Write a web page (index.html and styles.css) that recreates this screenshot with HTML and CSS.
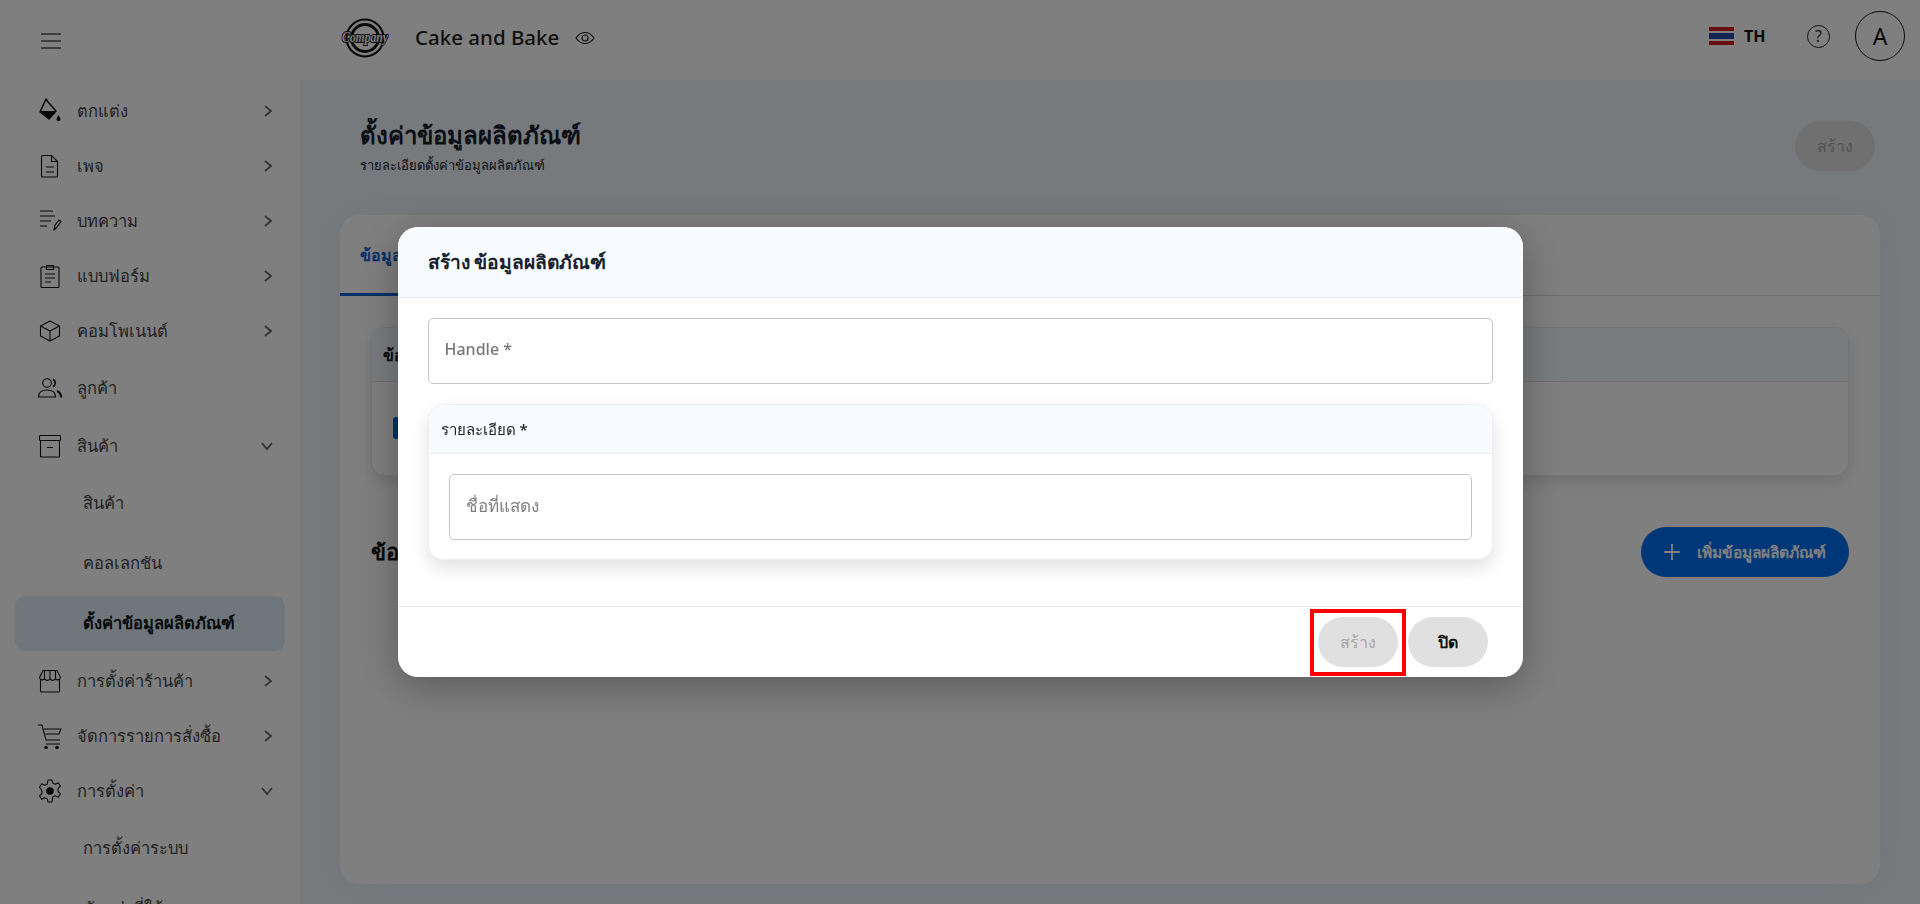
FILE: index.html
```html
<!DOCTYPE html>
<html lang="th">
<head>
<meta charset="utf-8">
<title>ตั้งค่าข้อมูลผลิตภัณฑ์</title>
<link rel="stylesheet" href="styles.css">
</head>
<body>
<div class="app">
  <aside class="sidebar">
    <div class="burger-row">
      <svg width="20" height="16" viewBox="0 0 20 16" fill="none" stroke="#555" stroke-width="1.6"><path d="M0 1h20M0 8h20M0 15h20"/></svg>
    </div>
    <nav class="nav">
      <a class="nav-item"><span class="ico"><svg width="26" height="26" viewBox="0 0 26 26"><path d="M9 1l2 3 8 9-7 8L3 14z" fill="none" stroke="#111" stroke-width="1.5" stroke-linejoin="round"/><path d="M3 13h16l-7 8z" fill="#111"/><path d="M21.500 17c1 2 2 3 2 4.200a2 2 0 0 1-4 0c0-1.200 1-2.200 2-4.200z" fill="#111"/></svg></span><span class="lbl">ตกแต่ง</span><svg class="chev" width="12" height="14" viewBox="0 0 12 14"><path d="M3 2l6 5-6 5"/></svg></a>
      <a class="nav-item"><span class="ico"><svg width="22" height="26" viewBox="0 0 22 26" fill="none" stroke="#111" stroke-width="1.1"><path d="M3.500 2.500h9l6 6v14.500a1 1 0 0 1-1 1h-14a1 1 0 0 1-1-1v-19.500a1 1 0 0 1 1-1zM12.500 2.500v6h6M7 14h8M7 19h8"/></svg></span><span class="lbl">เพจ</span><svg class="chev" width="12" height="14" viewBox="0 0 12 14"><path d="M3 2l6 5-6 5"/></svg></a>
      <a class="nav-item"><span class="ico"><svg width="24" height="24" viewBox="0 0 24 24" fill="none" stroke="#111" stroke-width="1.2"><path d="M2 2h13M2 7h15M2 12h11M2 17h7"/><path d="M16 21l1-5 4-5 2 1.500-4 5.500z" stroke-linejoin="round"/></svg></span><span class="lbl">บทความ</span><svg class="chev" width="12" height="14" viewBox="0 0 12 14"><path d="M3 2l6 5-6 5"/></svg></a>
      <a class="nav-item"><span class="ico"><svg width="22" height="26" viewBox="0 0 22 26" fill="none" stroke="#111" stroke-width="1.1"><rect x="2" y="4" width="18" height="20.500" rx="1"/><path d="M7.500 6.500V2.500h7v4zM6 11h10M6 15h10M6 19h6"/></svg></span><span class="lbl">แบบฟอร์ม</span><svg class="chev" width="12" height="14" viewBox="0 0 12 14"><path d="M3 2l6 5-6 5"/></svg></a>
      <a class="nav-item"><span class="ico"><svg width="24" height="24" viewBox="0 0 24 24" fill="none" stroke="#111" stroke-width="1.1" stroke-linejoin="round"><path d="M12 2l9.500 5v10L12 22l-9.500-5V7zM2.500 7L12 12l9.500-5M12 12v10"/></svg></span><span class="lbl">คอมโพเนนต์</span><svg class="chev" width="12" height="14" viewBox="0 0 12 14"><path d="M3 2l6 5-6 5"/></svg></a>
      <a class="nav-item plain"><span class="ico"><svg width="26" height="22" viewBox="0 0 26 22" fill="none" stroke="#111" stroke-width="1.1"><circle cx="10" cy="6" r="4.300"/><path d="M1.500 20c0-5 4-7 8.500-7s8.500 2 8.500 7z"/><path d="M16 2.200a4.300 4.300 0 0 1 0 7.600" stroke-width="1.600"/><path d="M20 14c2.500 1 4 3 4.300 6.500" stroke-width="2"/></svg></span><span class="lbl">ลูกค้า</span></a>
      <a class="nav-item"><span class="ico"><svg width="24" height="24" viewBox="0 0 24 24" fill="none" stroke="#111" stroke-width="1.1"><rect x="1.500" y="1.500" width="21" height="5" rx="1"/><path d="M2.500 6.500V22a1 1 0 0 0 1 1h17a1 1 0 0 0 1-1V6.500M9 13.500h6"/></svg></span><span class="lbl">สินค้า</span><svg class="chev" width="14" height="12" viewBox="0 0 14 12"><path d="M2 3l5 6 5-6"/></svg></a>
      <a class="sub-item">สินค้า</a>
      <a class="sub-item">คอลเลกชัน</a>
      <a class="sub-item active">ตั้งค่าข้อมูลผลิตภัณฑ์</a>
      <a class="nav-item"><span class="ico"><svg width="24" height="24" viewBox="0 0 24 24" fill="none" stroke="#111" stroke-width="1.1"><path d="M5 1.500h14l3.500 7a3 3 0 0 1-5 1.500 3.500 3.500 0 0 1-5.500 0 3.500 3.500 0 0 1-5.500 0 3 3 0 0 1-5-1.500z"/><path d="M6.500 2v8M12 2v8M17.500 2v8"/><path d="M2.500 10v12a1 1 0 0 0 1 1h17a1 1 0 0 0 1-1V10"/></svg></span><span class="lbl">การตั้งค่าร้านค้า</span><svg class="chev" width="12" height="14" viewBox="0 0 12 14"><path d="M3 2l6 5-6 5"/></svg></a>
      <a class="nav-item"><span class="ico"><svg width="26" height="26" viewBox="0 0 26 26" fill="none" stroke="#111" stroke-width="1.1"><path d="M1 2h4l4 15h14M7 6h17l-2 5H8.500M9 21h14"/><circle cx="9" cy="24.500" r="1.200" fill="#111"/><circle cx="20" cy="24.500" r="1.200" fill="#111"/></svg></span><span class="lbl">จัดการรายการสั่งซื้อ</span><svg class="chev" width="12" height="14" viewBox="0 0 12 14"><path d="M3 2l6 5-6 5"/></svg></a>
      <a class="nav-item"><span class="ico"><svg width="24" height="24" viewBox="0 0 24 24" fill="none" stroke="#111" stroke-width="1.1" stroke-linejoin="round"><path d="M10 1h4l.8 3.200 2.600 1.100 2.900-1.500 2.200 3.400-2.400 2.300v3l2.400 2.300-2.200 3.400-2.900-1.500-2.600 1.100L14 23h-4l-.8-3.200-2.600-1.100-2.900 1.500-2.200-3.400 2.400-2.300v-3L1.500 8.200l2.200-3.400 2.900 1.500 2.600-1.100z"/><circle cx="12" cy="12" r="3.200" fill="#111"/></svg></span><span class="lbl">การตั้งค่า</span><svg class="chev" width="14" height="12" viewBox="0 0 14 12"><path d="M2 3l5 6 5-6"/></svg></a>
      <a class="sub-item">การตั้งค่าระบบ</a>
      <a class="sub-item">ตัวแปรที่ใช้</a>
    </nav>
  </aside>
  <div class="content">
    <header class="topbar">
      <svg class="logo" width="50" height="40" viewBox="0 0 50 40"><circle cx="25" cy="20" r="18.500" fill="none" stroke="#111" stroke-width="2"/><circle cx="25" cy="20" r="13.500" fill="none" stroke="#111" stroke-width="3"/><text class="logo-text" x="25" y="24" text-anchor="middle" textLength="46" lengthAdjust="spacingAndGlyphs">Company</text></svg>
      <span class="brand">Cake and Bake</span>
      <svg class="eye" width="20" height="14" viewBox="0 0 20 14" fill="none" stroke="#222" stroke-width="1.2"><path d="M1 7c2.500-3.800 5.500-5.500 9-5.500s6.500 1.700 9 5.500c-2.500 3.800-5.500 5.500-9 5.500S3.500 10.800 1 7z"/><circle cx="10" cy="7" r="3"/></svg>
      <div class="top-right">
        <span class="flag"><i class="s-red"></i><i class="s-white"></i><i class="s-blue"></i><i class="s-white"></i><i class="s-red"></i></span>
        <span class="lang">TH</span>
        <span class="help">?</span>
        <span class="avatar">A</span>
      </div>
    </header>
    <main class="main">
      <div class="page-head">
        <div>
          <h1 class="page-title">ตั้งค่าข้อมูลผลิตภัณฑ์</h1>
          <p class="page-sub">รายละเอียดตั้งค่าข้อมูลผลิตภัณฑ์</p>
        </div>
        <button class="btn btn-off">สร้าง</button>
      </div>
      <section class="panel">
        <div class="tabs"><span class="tab">ข้อมูลผลิตภัณฑ์</span></div>
        <div class="panel-body">
          <div class="inner-card">
            <div class="inner-head">ข้อมูลผลิตภัณฑ์</div>
            <div class="inner-row"><span class="check"></span></div>
          </div>
          <div class="section-row">
            <h2 class="section-title">ข้อมูลผลิตภัณฑ์</h2>
            <button class="btn-add"><svg width="20" height="20" viewBox="0 0 20 20" fill="none" stroke="#fff" stroke-width="1.800"><path d="M10 2v16M2 10h16"/></svg><span>เพิ่มข้อมูลผลิตภัณฑ์</span></button>
          </div>
        </div>
      </section>
    </main>
  </div>
</div>
<div class="overlay">
  <div class="modal">
    <div class="modal-head">สร้าง ข้อมูลผลิตภัณฑ์</div>
    <div class="modal-body">
      <div class="field field-latin">Handle *</div>
      <div class="detail">
        <div class="detail-head">รายละเอียด *</div>
        <div class="detail-body"><div class="field">ชื่อที่แสดง</div></div>
      </div>
    </div>
    <div class="modal-foot">
      <button class="btn btn-off">สร้าง<span class="mark"></span></button>
      <button class="btn btn-close">ปิด</button>
    </div>
  </div>
</div>
</body>
</html>
```
FILE: styles.css
```css
*{box-sizing:border-box}
html,body{margin:0;height:100%;overflow:hidden}
body{font-family:"Noto Sans","Noto Sans CJK SC",sans-serif;color:#111;background:#fff}
h1,h2,p{margin:0}
button{font:inherit;border:0;padding:0}

.app{display:flex;height:904px}
.sidebar{width:300px;flex:none;background:#fff;overflow:hidden}
.burger-row{height:83px;padding:33px 0 0 41px}
.burger-row svg{display:block}
.nav{display:flex;flex-direction:column}
.nav-item{display:flex;align-items:center;flex:none;height:55px;padding:0 26px 0 30px;color:#444;font-size:16.500px;font-weight:500}
.nav-item.plain{margin:2px 0 3px}
.ico{width:40px;margin-right:7px;display:flex;justify-content:center;align-items:center}
.lbl{flex:1}
.chev{fill:none;stroke:#666;stroke-width:1.8}
.sub-item{display:flex;align-items:center;flex:none;height:60px;padding:0 0 1px 83px;color:#444;font-size:16.500px;font-weight:500}
.sub-item.active{height:55px;margin:2.500px 15px;padding-left:68px;background:#deedf8;border-radius:10px;color:#111;font-weight:600}

.content{flex:1;display:flex;flex-direction:column;min-width:0}
.topbar{display:flex;align-items:center;height:80px;flex:none;padding:0 15px 8px 40px;background:#fff}
.logo{flex:none;margin-top:4px}
.logo-text{font-family:"Liberation Serif",serif;font-style:italic;font-weight:700;font-size:15px;fill:#fff;stroke:#111;stroke-width:2px;paint-order:stroke}
.brand{margin:2px 0 0 25px;font-size:20.500px;font-weight:500;color:#222}
.eye{margin:4px 0 0 16px}
.top-right{margin-left:auto;display:flex;align-items:center}
.flag{display:flex;flex-direction:column;width:25px;height:18px}
.flag i{display:block}
.flag .s-blue{height:6px;background:#2d4aa8}
.flag .s-red{height:4px;background:#d0181f}
.flag .s-white{height:2px;background:#fff}
.lang{margin-left:10px;font-size:16px;font-weight:700;width:22px}
.help{margin-left:41px;width:23px;height:23px;border:1.300px solid #222;border-radius:50%;display:flex;align-items:center;justify-content:center;font-size:16px;color:#333}
.avatar{margin-left:25px;width:50px;height:50px;border:1.500px solid #111;border-radius:50%;display:flex;align-items:center;justify-content:center;font-size:23px;color:#111}

.main{flex:1;background:#eff5fa;padding:0 40px 20px;display:flex;flex-direction:column;min-height:0}
.page-head{display:flex;justify-content:space-between;align-items:flex-start;height:135px;padding:40px 5px 0 20px}
.page-title{font-size:24px;line-height:30px;font-weight:600;color:#16202c}
.page-sub{font-size:13px;line-height:20px;font-weight:500;margin-top:5px;color:#16202c}
.btn{width:80px;height:50px;border-radius:25px;font-size:16px;font-weight:500;flex:none}
.page-head .btn{margin-top:1px}
.btn-off{background:#e0e0e0;color:#a6a6a6}
.btn-close{background:#e0e0e0;color:#111;font-weight:700}

.panel{flex:1;background:#fff;border-radius:20px;box-shadow:0 0 30px rgba(220,230,240,.5)}
.tabs{height:81px;border-bottom:1px solid #d8d8d8;display:flex}
.tab{display:flex;align-items:center;height:81px;padding:2px 20px 0;border-bottom:3px solid #0a62d0;color:#0a62d0;font-size:16px;font-weight:600}
.panel-body{padding:31px 31px 0}
.inner-card{height:149px;border:1px solid #e8e8e8;border-radius:14px;box-shadow:0 6px 16px rgba(0,0,0,.12);overflow:hidden;background:#fff}
.inner-head{height:54px;background:#f2f8fd;border-bottom:1px solid #ddd;display:flex;align-items:center;padding:2px 0 0 11px;font-size:16px;font-weight:600}
.inner-row{padding:35px 21px}
.check{display:block;width:22px;height:22px;background:#0a62d0;border-radius:3px}
.section-row{display:flex;justify-content:space-between;align-items:center;height:50px;margin-top:51px}
.section-title{font-size:22px;font-weight:600;color:#111}
.btn-add{display:flex;align-items:center;width:208px;height:50px;margin-left:1px;padding-left:21px;border-radius:25px;background:#006ef2;color:#fff;font-size:15.500px;font-weight:600}
.btn-add span{margin-left:15px;white-space:nowrap}

.overlay{position:fixed;inset:0;background:rgba(0,0,0,.5);display:flex;justify-content:center;align-items:flex-start;padding-top:227px}
.modal{width:1125px;height:450px;background:#fff;border-radius:20px;box-shadow:0 10px 40px rgba(0,0,0,.3);overflow:hidden;display:flex;flex-direction:column}
.modal-head{height:71px;flex:none;background:#f7fbff;border-bottom:1px solid #e6eaee;padding:0 30px;display:flex;align-items:center;font-size:19.200px;font-weight:600;color:#16202c}
.modal-body{flex:1;padding:20px 30px 0}
.field{height:66px;border:1.500px solid #c6c6c6;border-radius:5px;padding:0 16px 4px;display:flex;align-items:center;font-size:17px;color:#808080}
.field-latin{font-size:16px;font-weight:500;color:#777}
.detail{margin-top:20px;height:156px;border:1px solid #eceff2;border-radius:16px;box-shadow:0 8px 18px rgba(0,0,0,.12);overflow:hidden}
.detail-head{height:49px;background:#f7fbff;border-bottom:1px solid #e8ecef;padding:2px 12px 0;display:flex;align-items:center;font-size:15px;font-weight:500;color:#222}
.detail-body{padding:20px}
.modal-foot{height:71px;flex:none;border-top:1px solid #e6eaee;padding:10px 35px 0 0;display:flex;justify-content:flex-end;gap:10px}
.modal-foot .btn{position:relative}
.mark{position:absolute;left:-8px;right:-8px;top:-8px;bottom:-9px;border:4px solid #f00;pointer-events:none}
```
